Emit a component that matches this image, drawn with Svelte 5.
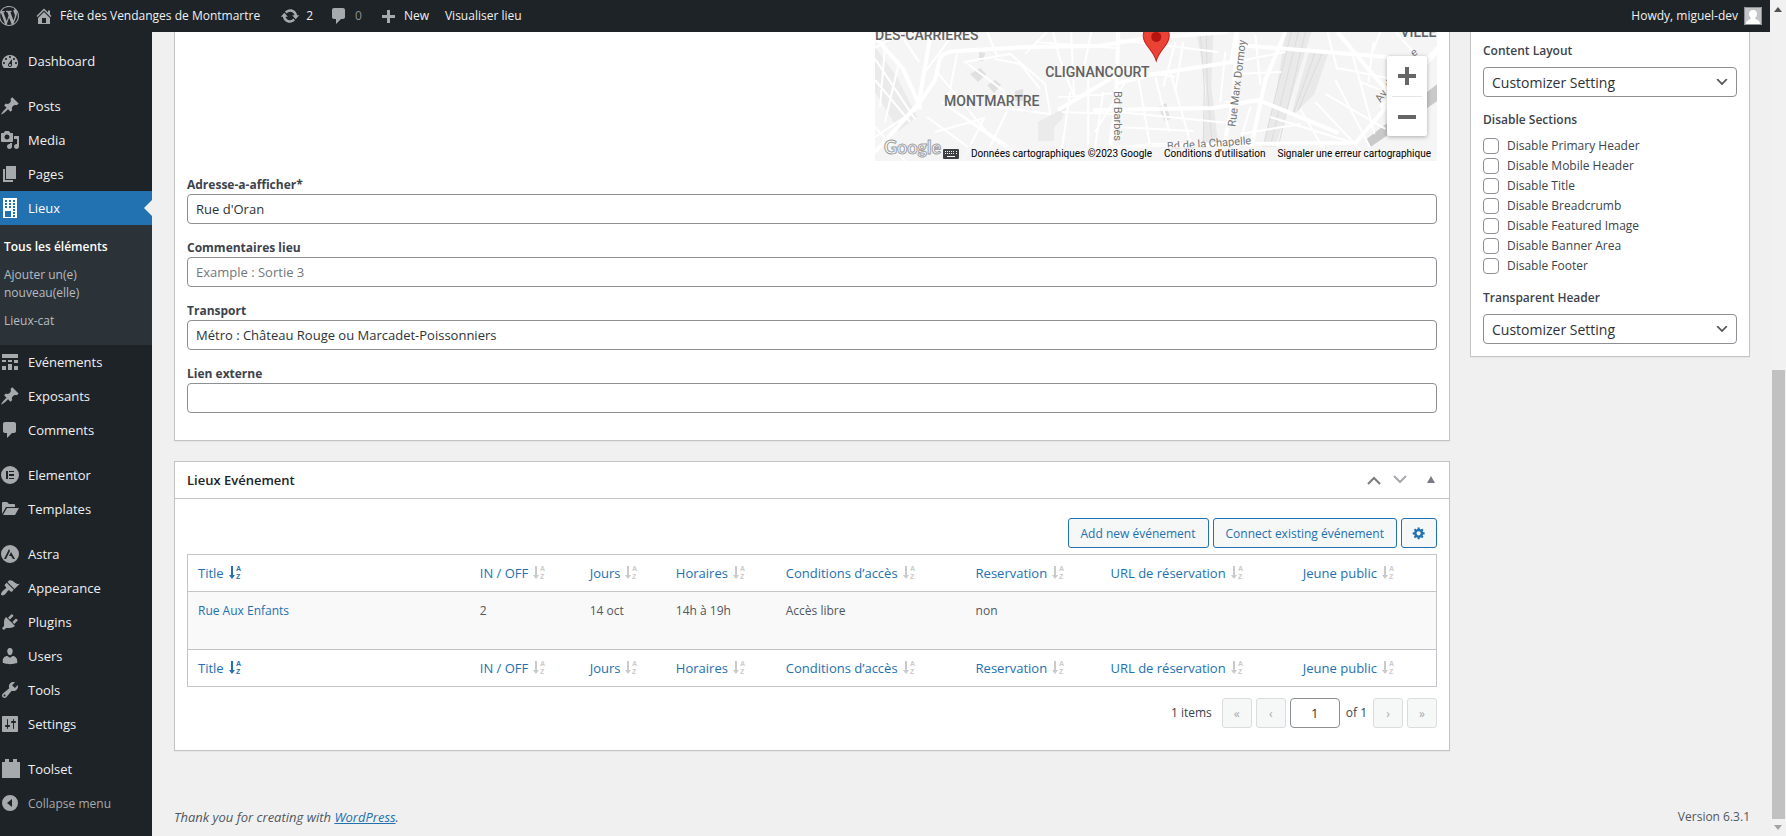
<script>
	const icons = {
		wordpress: 'M20 10c0-5.51-4.49-10-10-10C4.48 0 0 4.49 0 10c0 5.52 4.48 10 10 10 5.51 0 10-4.48 10-10zM7.78 15.37L4.37 6.22c.55-.02 1.17-.08 1.17-.08.5-.06.44-1.13-.06-1.11 0 0-1.45.11-2.37.11-.18 0-.37 0-.58-.01C4.12 2.69 6.87 1.11 10 1.11c2.33 0 4.45.87 6.05 2.34-.68-.11-1.65.39-1.65 1.58 0 .74.45 1.36.9 2.1.35.61.55 1.36.55 2.46 0 1.49-1.4 5-1.4 5l-3.03-8.37c.54-.02.82-.17.82-.17.5-.05.44-1.25-.06-1.22 0 0-1.44.12-2.38.12-.87 0-2.33-.12-2.33-.12-.5-.03-.56 1.2-.06 1.22l.92.08 1.26 3.41zM17.41 10c.24-.64.74-1.87.43-4.25.7 1.29 1.05 2.71 1.05 4.25 0 3.29-1.73 6.24-4.4 7.78.97-2.59 1.94-5.2 2.92-7.78zM6.1 18.09C3.12 16.65 1.11 13.53 1.11 10c0-1.3.23-2.48.72-3.59C3.25 10.3 4.67 14.2 6.1 18.09zm4.03-6.63l2.58 6.98c-.86.29-1.76.45-2.71.45-.79 0-1.57-.11-2.29-.33.81-2.38 1.62-4.74 2.42-7.1z',
		home: 'M16 8.5l1.53 1.53-1.06 1.06L10 4.6l-6.47 6.49-1.06-1.06L10 2.5l4 4v-2h2v4zm-6-2.46l6 5.99V18H4v-5.97zM12 17v-5H8v5h4z',
		update: 'M10.2 3.28c3.53 0 6.43 2.61 6.92 6h2.08l-3.5 4-3.5-4h2.32c-.45-1.97-2.21-3.45-4.32-3.45-1.45 0-2.73.71-3.54 1.78L4.95 5.66C6.23 4.2 8.11 3.28 10.2 3.28zm-.4 13.44c-3.52 0-6.43-2.61-6.92-6H.8l3.5-4c1.17 1.33 2.33 2.67 3.5 4H5.48c.45 1.97 2.21 3.45 4.32 3.45 1.45 0 2.73-.71 3.54-1.78l1.71 1.95c-1.28 1.46-3.15 2.38-5.25 2.38z',
		comments: 'M5 2h9c1.1 0 2 .9 2 2v7c0 1.1-.9 2-2 2h-2l-5 5v-5H5c-1.1 0-2-.9-2-2V4c0-1.1.9-2 2-2z',
		plus: 'M17 9v3h-5v5H9v-5H4V9h5V4h3v5h5z',
		dashboard: 'M3.76 17h12.48A7.998 7.998 0 0 0 10 4a7.998 7.998 0 0 0-6.24 13zM10 5c.55 0 1 .45 1 1s-.45 1-1 1-1-.45-1-1 .45-1 1-1zM6 7c.55 0 1 .45 1 1s-.45 1-1 1-1-.45-1-1 .45-1 1-1zm8 0c.55 0 1 .45 1 1s-.45 1-1 1-1-.45-1-1 .45-1 1-1zm-5.37 5.55L12 8v6c0 1.1-.9 2-2 2s-2-.9-2-2c0-.57.24-1.08.63-1.45zM4 11c.55 0 1 .45 1 1s-.45 1-1 1-1-.45-1-1 .45-1 1-1zm12 0c.55 0 1 .45 1 1s-.45 1-1 1-1-.45-1-1 .45-1 1-1zm-5 3c0-.55-.45-1-1-1s-1 .45-1 1 .45 1 1 1 1-.45 1-1z',
		post: 'M10.44 3.02l1.82-1.82 6.36 6.35-1.83 1.82c-1.05-.68-2.48-.57-3.41.36l-.75.75c-.92.93-1.04 2.35-.35 3.41l-1.83 1.82-2.41-2.41-2.8 2.79c-.42.42-3.38 2.71-3.8 2.29s1.86-3.39 2.28-3.81l2.79-2.79L4.1 9.36l1.83-1.82c1.05.69 2.48.57 3.4-.36l.75-.75c.93-.92 1.05-2.35.36-3.41z',
		media: 'M13 11V4c0-.55-.45-1-1-1h-1.67L9 1H5L3.67 3H2c-.55 0-1 .45-1 1v7c0 .55.45 1 1 1h10c.55 0 1-.45 1-1zM7 4.5c1.38 0 2.5 1.12 2.5 2.5S8.38 9.5 7 9.5 4.5 8.38 4.5 7 5.62 4.5 7 4.5zM14 6h5v10.5c0 1.38-1.12 2.5-2.5 2.5S14 17.88 14 16.5s1.12-2.5 2.5-2.5c.17 0 .34.02.5.05V9h-3V6zm-4 8.05V13h2v3.5c0 1.38-1.12 2.5-2.5 2.5S7 17.88 7 16.5 8.12 14 9.5 14c.17 0 .34.02.5.05z',
		page: 'M6 15V2h10v13H6zm-1 1h8v2H3V5h2v11z',
		building: 'M3 0h14v20H3zM5 2v2h2V2zm4 0v2h2V2zm4 0v2h2V2zM5 5v2h2V5zm4 0v2h2V5zm4 0v2h2V5zM5 8v2h2V8zm4 0v2h2V8zm4 0v2h2V8zM5 13v6h6v-6zm8-2v2h2v-2zm0 3v2h2v-2zm0 3v2h2v-2z',
		schedule: 'M2 2h16v4H2V2zm0 8V8h4v2H2zm6-2h4v2H8V8zm6 3V8h4v3h-4zm-6 7v-6h4v6H8zm-6 0v-4h4v4H2zm12 0v-4h4v4h-4z',
		elementor: 'M10 1a9 9 0 1 0 0 18 9 9 0 0 0 0-18zM6 6h2v8H6zm3 0h5v1H9zm0 3h5v2H9zm0 4h5v1H9z',
		folder: 'M2 15V4q0-1 1-1h4l2 2h5q1 0 1 1v2H6zM7 9h12l-4 7H3z',
		astra: 'M10 1a9 9 0 1 0 0 18 9 9 0 0 0 0-18zM9 5l1 2-4 8H4zm2 3l4 7h-2l-2-3H9z',
		appearance: 'M14.48 11.06L7.41 3.99l1.5-1.5c.5-.56 2.3-.47 3.51.32 1.21.8 1.43 1.28 2.91 2.1 1.18.64 2.45 1.26 4.45.85zm-.71.71L6.7 4.7 4.93 6.47c-.39.39-.39 1.02 0 1.41l1.06 1.06c.39.39.39 1.03 0 1.42-.6.6-1.43 1.11-2.21 1.69-.35.26-.7.53-1.01.84C1.43 14.23.4 16.08 1.4 17.07c.99 1 2.84-.03 4.18-1.36.31-.31.58-.66.85-1.02.57-.78 1.08-1.61 1.69-2.21.39-.39 1.02-.39 1.41 0l1.06 1.06c.39.39 1.02.39 1.41 0z',
		plugins: 'M13.11 4.36L9.87 7.6 8 5.73l3.24-3.24c.35-.34 1.05-.2 1.56.32.52.51.66 1.21.31 1.55zm-8 1.77l.91-1.12 9.01 9.01-1.19.84c-.71.71-2.63 1.16-3.82 1.16H6.14L4.9 17.26c-.59.59-1.54.59-2.12 0-.59-.58-.59-1.53 0-2.12l1.24-1.24v-3.88c0-1.13.4-3.19 1.09-3.89zm7.26 3.97l3.24-3.24c.34-.35 1.04-.21 1.55.31.52.51.66 1.21.31 1.55l-3.24 3.25z',
		users: 'M10 9.25c-2.27 0-2.73-3.44-2.73-3.44C7 4.02 7.82 2 9.97 2c2.16 0 2.98 2.02 2.71 3.81 0 0-.41 3.44-2.68 3.44zm0 2.57L12.72 10c2.39 0 4.52 2.33 4.52 4.53v2.49s-3.65 1.13-7.24 1.13c-3.65 0-7.24-1.13-7.24-1.13v-2.49c0-2.25 1.94-4.48 4.47-4.48z',
		tools: 'M16.68 9.77c-1.34 1.34-3.3 1.67-4.95.99l-5.41 6.52c-.99.99-2.59.99-3.58 0s-.99-2.59 0-3.57l6.52-5.42c-.68-1.65-.35-3.61.99-4.95 1.28-1.28 3.12-1.62 4.72-1.06l-2.89 2.89 2.82 2.82 2.86-2.87c.53 1.58.18 3.39-1.08 4.65zM3.81 16.21c.4.39 1.04.39 1.43 0 .4-.4.4-1.04 0-1.43-.39-.4-1.03-.4-1.43 0-.39.39-.39 1.03 0 1.43z',
		settings: 'M18 17V3c0-.55-.45-1-1-1H3c-.55 0-1 .45-1 1v14c0 .55.45 1 1 1h14c.55 0 1-.45 1-1zM8 11h1c.55 0 1 .45 1 1s-.45 1-1 1H8v1.5c0 .28-.22.5-.5.5s-.5-.22-.5-.5V13H6c-.55 0-1-.45-1-1s.45-1 1-1h1V5.5c0-.28.22-.5.5-.5s.5.22.5.5V11zm5-2h-1c-.55 0-1-.45-1-1s.45-1 1-1h1V5.5c0-.28.22-.5.5-.5s.5.22.5.5V7h1c.55 0 1 .45 1 1s-.45 1-1 1h-1v5.5c0 .28-.22.5-.5.5s-.5-.22-.5-.5V9z',
		toolset: 'M2 19V3h3V0h4v3h4V0h4v3h3v16z',
		collapse: 'M10 2a8 8 0 1 0 0 16 8 8 0 0 0 0-16zM12 6v8l-5-4z',
		gear: 'M18 12h-2.18c-.17.7-.44 1.35-.81 1.93l1.54 1.54-2.1 2.1-1.54-1.54c-.58.36-1.23.63-1.91.79V19H8v-2.18c-.68-.16-1.33-.43-1.91-.79l-1.54 1.54-2.12-2.12 1.54-1.54c-.36-.58-.63-1.23-.79-1.91H1V9.03h2.17c.16-.7.44-1.35.8-1.94L2.43 5.55l2.1-2.1 1.54 1.54c.58-.37 1.24-.64 1.93-.81V2h3v2.18c.68.16 1.33.43 1.91.79l1.54-1.54 2.12 2.12-1.54 1.54c.36.59.64 1.24.8 1.94H18V12zm-8.5 1.5c1.66 0 3-1.34 3-3s-1.34-3-3-3-3 1.34-3 3 1.34 3 3 3z'
	}

	const menu = [
		[{ label: 'Dashboard', icon: 'dashboard' }],
		[
			{ label: 'Posts', icon: 'post' },
			{ label: 'Media', icon: 'media' },
			{ label: 'Pages', icon: 'page' },
			{ label: 'Lieux', icon: 'building', sub: ['Tous les éléments', 'Ajouter un(e) nouveau(elle)', 'Lieux-cat'] },
			{ label: 'Evénements', icon: 'schedule' },
			{ label: 'Exposants', icon: 'post' },
			{ label: 'Comments', icon: 'comments' }
		],
		[
			{ label: 'Elementor', icon: 'elementor' },
			{ label: 'Templates', icon: 'folder' }
		],
		[
			{ label: 'Astra', icon: 'astra' },
			{ label: 'Appearance', icon: 'appearance' },
			{ label: 'Plugins', icon: 'plugins' },
			{ label: 'Users', icon: 'users' },
			{ label: 'Tools', icon: 'tools' },
			{ label: 'Settings', icon: 'settings' }
		],
		[{ label: 'Toolset', icon: 'toolset' }]
	]

	const fields = [
		{ id: 'adresse', label: 'Adresse-a-afficher*', value: "Rue d'Oran" },
		{ id: 'commentaires', label: 'Commentaires lieu', value: '', placeholder: 'Example : Sortie 3' },
		{ id: 'transport', label: 'Transport', value: 'Métro : Château Rouge ou Marcadet-Poissonniers' },
		{ id: 'lien', label: 'Lien externe', value: '' }
	]

	const sections = ['Primary Header', 'Mobile Header', 'Title', 'Breadcrumb', 'Featured Image', 'Banner Area', 'Footer']

	const columns = [
		{ label: 'Title', width: 22.6, sorted: true },
		{ label: 'IN / OFF', width: 8.8 },
		{ label: 'Jours', width: 6.9 },
		{ label: 'Horaires', width: 8.8 },
		{ label: 'Conditions d’accès', width: 15.2 },
		{ label: 'Reservation', width: 10.8 },
		{ label: 'URL de réservation', width: 15.4 },
		{ label: 'Jeune public', width: 11.5 }
	]

	const rows = [['Rue Aux Enfants', '2', '14 oct', '14h à 19h', 'Accès libre', 'non', '', '']]

	let page = '1'
</script>

{#snippet icon(name)}
	<svg class="icon" viewBox="0 0 20 20" aria-hidden="true"><path fill-rule="evenodd" d={icons[name]} /></svg>
{/snippet}

{#snippet headings()}
	<tr>
		{#each columns as col}
			<th style="width: {col.width}%">
				<a href="#sort" class="sort">
					{col.label}
					<svg class:sorted={col.sorted} viewBox="0 0 13 18" aria-hidden="true">
						<path d="M2 2h2v9h2l-3 4-3-4h2z" />
						<text x="7" y="7">A</text>
						<text x="7" y="15">Z</text>
					</svg>
				</a>
			</th>
		{/each}
	</tr>
{/snippet}

<div class="window">
	<div class="page">
		<header class="adminbar">
			<a href="#about" class="wp-logo" aria-label="About WordPress">{@render icon('wordpress')}</a>
			<a href="#site" class="site">{@render icon('home')}Fête des Vendanges de Montmartre</a>
			<a href="#updates" class="updates">{@render icon('update')}2</a>
			<a href="#comments" class="pending">{@render icon('comments')}<span>0</span></a>
			<a href="#new" class="new">{@render icon('plus')}New</a>
			<a href="#view">Visualiser lieu</a>
			<a href="#profile" class="account">
				Howdy, miguel-dev
				<svg class="avatar" viewBox="0 0 18 18" aria-hidden="true">
					<path fill="#c3c4c7" d="M0 0h18v18H0z" />
					<path fill="#fff" d="M9 3c3 0 4 2 4 4s-1 3-2 4c0 2 5 1 5 6H2c0-5 5-4 5-6-1-1-2-2-2-4s1-4 4-4z" />
					<path fill="none" stroke="#8c8f94" d="M.5.5h17v17H.5z" />
				</svg>
			</a>
		</header>

		<div class="body">
			<nav class="menu">
				{#each menu as group}
					<ul>
						{#each group as item}
							<li>
								<a href="#menu" class="item" class:current={item.sub}>{@render icon(item.icon)}{item.label}</a>
								{#if item.sub}
									<ul class="submenu">
										{#each item.sub as entry, i}
											<li><a href="#submenu" class:active={i === 0}>{entry}</a></li>
										{/each}
									</ul>
								{/if}
							</li>
						{/each}
					</ul>
				{/each}
				<button class="item collapse">{@render icon('collapse')}Collapse menu</button>
			</nav>

			<main>
				<div class="columns">
					<div class="primary">
						<section class="box fields">
							<div class="map">
								<svg class="streets" viewBox="0 0 562 129" preserveAspectRatio="xMidYMax slice" aria-hidden="true">
									<path fill="#f5f5f5" d="M0 0h562v129H0z" />
									<path fill="#ebebeb" d="M0 15l22 30 20 40-18 14L0 60zM163 90l28-15-4 12-8 8v14h-16z" />
									<path fill="#e0e0e0" d="M95 42l10-6 6 6-8 8zM112 53l8-5 6 5-7 8zM140 59l8-2v12h-8zM104 20l6 1-2 8h-4zM283 75l8-4 4 16-6 2z" />
									<path fill="#e9e9e9" d="M321 0h17l-2 55 7 58h-16l4-58zM410 0h26l-14 45-22 70h-13l14-55zM434 18h20l-15 44-24 24z" />
									<path class="rail" d="M325 0l4 55-1 58M331 0l1 55 5 58M416 0l-15 60-12 50M423 0l-15 60-12 50M430 0l-14 60-12 50M440 20l-22 62M447 20l-24 58" />
									<path fill="#c9c9c9" d="M490 108l72-56v17l-67 46z" />
									<g class="minor">
										<path d="M0 27l40 60M0 48l35 42M10 15l-5 60M24 30L10 90M0 105l45-30M0 95l30 34M52 85l60 44M66 70l90 59M60 100l50-14M88 128l20-40M108 129l24-50M78 78l72 51M130 60l-40-30 45-8 35 30 5 30-60-8zM120 27l25 5 20 25M60 38l50 60M82 22l-10 50M150 22l22-22M112 0l10 24M178 0l6 25 15 40M196 0l3 65M216 0l-8 40M183 65l60-4M187 80l55 2M195 60l-10 69M213 35v94M228 60l-10 69M160 10l80 6M240 35l60 10M243 8l100 12M300 10l-12 45M263 45l12 70M280 45l14 55M295 40l20 70M308 10l-8 50M243 95l75 4M243 80l120 12M250 50l-30 50M350 20l-5 50M350 70h40M380 3l5 50M360 30l50-10M360 42l46-2M365 102l60-10M452 0l10 38M462 36l50 10M440 70l45 48M450 62l60 35M460 48l36 70M475 15l24 87M498 10l-5 40M505 0l-10 25M520 0l20 22M485 50l50 20M395 85l80 25M425 77l30 52M375 75l-15 50M0 16l28-16M24 0l20 30M80 0L50 40" />
									</g>
									<g class="major">
										<path d="M0 120l45-50 15-22 5-22q4-7 18-7l70-4 70-1 50-8 80-6" />
										<path d="M0 5l28 32 18 40M56 0L44 70M243 0l-2 70-8 59M240 52l40-10 76-12 5-30M183 78l60-36M218 78l120-2 45-8 80 33M362 0l-4 65-12 64M362 13l150 12M462 0l30 36 40 46M195 120l85-7 200-2 30-35 52-60M410 0l-20 48-14 66M562 20L505 75" />
									</g>
									<path class="pin" d="M268 4a13 13 0 0 1 26 0c0 9-10 14-13 25-3-11-13-16-13-25z" />
									<circle cx="281" cy="5" r="5" fill="#b31412" />
									<g class="district">
										<text x="0" y="8">DES-CARRIÈRES</text>
										<text x="170" y="45">CLIGNANCOURT</text>
										<text x="69" y="74">MONTMARTRE</text>
										<text x="525" y="5">VILLE</text>
									</g>
									<g class="road">
										<text transform="translate(239 59) rotate(90)">Bd Barbès</text>
										<text transform="translate(360 95) rotate(-83)">Rue Marx Dormoy</text>
										<text transform="translate(292 118) rotate(-4)">Bd de la Chapelle</text>
										<text transform="translate(505 71) rotate(-55)">Av. de</text>
										<text transform="translate(538 25) rotate(-35)">e</text>
									</g>
									<text class="google" x="9" y="122">Google</text>
								</svg>
								<div class="zoom">
									<button aria-label="Zoom in"><svg viewBox="0 0 18 18"><path d="M7 0h4v7h7v4h-7v7H7v-7H0V7h7z" /></svg></button>
									<button aria-label="Zoom out"><svg viewBox="0 0 18 18"><path d="M0 7h18v4H0z" /></svg></button>
								</div>
								<div class="credits">
									<svg viewBox="0 0 16 10" aria-hidden="true">
										<path fill-rule="evenodd" d="M1 0h14q1 0 1 1v8q0 1-1 1H1q-1 0-1-1V1q0-1 1-1zM2 2v1h1V2zm2 0v1h1V2zm2 0v1h1V2zm2 0v1h1V2zm2 0v1h1V2zm3 0v1h1V2zM2 4v1h1V4zm2 0v1h1V4zm2 0v1h1V4zm2 0v1h1V4zm2 0v1h1V4zm3 0v1h1V4zM4 7v1h8V7z" />
									</svg>
									<span>Données cartographiques ©2023 Google</span>
									<a href="#terms">Conditions d'utilisation</a>
									<a href="#report">Signaler une erreur cartographique</a>
								</div>
							</div>

							{#each fields as field}
								<div class="field">
									<label for={field.id}>{field.label}</label>
									<input id={field.id} type="text" value={field.value} placeholder={field.placeholder} />
								</div>
							{/each}
						</section>

						<section class="box related">
							<div class="box-header">
								<h2>Lieux Evénement</h2>
								<button aria-label="Move up"><svg viewBox="0 0 14 10"><path class="line" d="M1 9l6-6 6 6" /></svg></button>
								<button aria-label="Move down" class="off"><svg viewBox="0 0 14 10"><path class="line" d="M1 1l6 6 6-6" /></svg></button>
								<button aria-label="Toggle panel"><svg viewBox="0 0 14 10"><path d="M7 1l4 7H3z" /></svg></button>
							</div>
							<div class="inside">
								<div class="actions">
									<button>Add new événement</button>
									<button>Connect existing événement</button>
									<button class="cog" aria-label="Select columns">{@render icon('gear')}</button>
								</div>
								<table>
									<thead>{@render headings()}</thead>
									<tbody>
										{#each rows as row}
											<tr>
												{#each row as cell, i}
													<td>{#if i === 0}<a href="#event">{cell}</a>{:else}{cell}{/if}</td>
												{/each}
											</tr>
										{/each}
									</tbody>
									<tfoot>{@render headings()}</tfoot>
								</table>
								<div class="pagination">
									<span class="count">1 items</span>
									<button disabled aria-label="First page">«</button>
									<button disabled aria-label="Previous page">‹</button>
									<input type="text" aria-label="Current page" bind:value={page} />
									<span class="total">of 1</span>
									<button disabled aria-label="Next page">›</button>
									<button disabled aria-label="Last page">»</button>
								</div>
							</div>
						</section>
					</div>

					<aside class="box settings">
						<label class="title" for="layout">Content Layout</label>
						<select id="layout"><option>Customizer Setting</option></select>
						<fieldset>
							<legend class="title">Disable Sections</legend>
							{#each sections as name}
								<label class="check"><input type="checkbox" />Disable {name}</label>
							{/each}
						</fieldset>
						<label class="title" for="transparent">Transparent Header</label>
						<select id="transparent"><option>Customizer Setting</option></select>
					</aside>
				</div>

				<footer>
					<em>Thank you for creating with <a href="#wordpress">WordPress</a>.</em>
					<span>Version 6.3.1</span>
				</footer>
			</main>
		</div>
	</div>

	<div class="scrollbar" aria-hidden="true">
		<svg viewBox="0 0 8 5"><path fill="#505050" d="M4 0l4 5H0z" /></svg>
		<div class="track"><div class="thumb"></div></div>
		<svg viewBox="0 0 8 5"><path fill="#a3a3a3" d="M0 0h8L4 5z" /></svg>
	</div>
</div>

<style>
	:global(body) {
		background: #f0f0f1;
		color: #3c434a;
		font-family: "Open Sans", "Noto Sans", sans-serif;
		font-size: 12px;
		line-height: 18px;
	}

	.window {
		display: flex;
		height: 100vh;
		overflow: hidden;
	}

	.page {
		flex: 1;
		min-width: 0;
		display: flex;
		flex-direction: column;
	}

	.window *,
	.window {
		box-sizing: border-box;
	}

	a {
		color: #2271b1;
		text-decoration: none;
	}

	button,
	input,
	select {
		font-family: inherit;
		font-size: 12px;
		margin: 0;
	}

	ul {
		list-style: none;
		margin: 0;
		padding: 0;
	}

	.icon {
		width: 20px;
		height: 20px;
		flex: none;
		fill: #a7aaad;
	}

	/* admin bar */
	.adminbar {
		display: flex;
		align-items: center;
		flex: none;
		height: 32px;
		padding-right: 8px;
		background: #1d2327;
	}

	.adminbar a {
		display: flex;
		align-items: center;
		gap: 6px;
		color: #f0f0f1;
		white-space: nowrap;
	}

	.adminbar .wp-logo {
		width: 34px;
	}

	.wp-logo .icon {
		margin-left: -1px;
	}

	.adminbar .updates,
	.adminbar .pending,
	.adminbar .new {
		margin-right: 16px;
	}

	.adminbar .site {
		margin-right: 20px;
	}

	.pending span {
		color: #8c8f94;
	}

	.adminbar .account {
		margin-left: auto;
	}

	.avatar {
		width: 18px;
		height: 18px;
	}

	.body {
		display: flex;
		flex: 1;
		min-height: 0;
	}

	/* side menu */
	.menu {
		display: flex;
		flex-direction: column;
		flex: none;
		gap: 11px;
		width: 152px;
		padding-top: 12px;
		background: #1d2327;
	}

	.item {
		display: flex;
		align-items: center;
		gap: 8px;
		position: relative;
		width: 100%;
		height: 34px;
		padding: 0;
		border: 0;
		background: none;
		color: #f0f0f1;
		font-size: 13px;
	}

	.item.current {
		background: #2271b1;
		color: #fff;
	}

	.current .icon {
		fill: #fff;
	}

	.current::after {
		content: "";
		position: absolute;
		right: 0;
		border: 8px solid transparent;
		border-right-color: #f0f0f1;
	}

	.collapse {
		margin-top: -11px;
		color: #a7aaad;
		font-size: 12px;
	}

	.submenu {
		padding: 8px 0 10px;
		background: #2c3338;
	}

	.submenu a {
		display: block;
		padding: 5px 40px 5px 4px;
		color: #b5bcc2;
	}

	.submenu .active {
		padding-right: 0;
		color: #fff;
		font-weight: 600;
	}

	/* content */
	main {
		flex: 1;
		min-width: 0;
		display: flex;
		flex-direction: column;
		padding: 0 20px 0 22px;
	}

	.columns {
		display: flex;
		align-items: flex-start;
		gap: 20px;
	}

	.primary {
		flex: 1;
		min-width: 0;
	}

	.box {
		border: 1px solid #c3c4c7;
		background: #fff;
		box-shadow: 0 1px 1px rgba(0, 0, 0, 0.04);
	}

	.fields {
		padding: 0 12px 27px;
		border-top: 0;
		margin-bottom: 20px;
	}

	.field {
		display: flex;
		flex-direction: column;
		margin-top: 15px;
	}

	.field label {
		font-weight: 700;
	}

	input[type="text"],
	select {
		height: 30px;
		padding: 0 8px;
		border: 1px solid #8c8f94;
		border-radius: 4px;
		background: #fff;
		color: #2c3338;
		font-size: 13px;
	}

	input::placeholder {
		color: #72777c;
		opacity: 1;
	}

	/* map */
	.map {
		position: relative;
		width: 45%;
		height: 129px;
		margin-left: auto;
		overflow: hidden;
		font-family: Roboto, sans-serif;
	}

	.streets {
		display: block;
		width: 100%;
		height: 100%;
	}

	.minor path,
	.major path {
		fill: none;
		stroke: #fff;
		stroke-width: 2;
	}

	.major path {
		stroke-width: 4;
	}

	.rail {
		fill: none;
		stroke: #dcdcdc;
	}

	.pin {
		fill: #ea4335;
		stroke: #c5221f;
	}

	.district text {
		fill: #616161;
		font-size: 14px;
		font-weight: 500;
	}

	.road text {
		fill: #757575;
		font-size: 11px;
	}

	.google {
		fill: #fff;
		stroke: #9e9e9e;
		font-family: Lato, sans-serif;
		font-size: 18px;
		font-weight: 700;
	}

	.zoom {
		position: absolute;
		top: 24px;
		right: 10px;
		display: flex;
		flex-direction: column;
		width: 40px;
		padding: 0 5px;
		border-radius: 2px;
		background: #fff;
		box-shadow: 0 1px 4px rgba(0, 0, 0, 0.3);
	}

	.zoom button {
		height: 40px;
		padding: 0;
		border: 0;
		background: none;
	}

	.zoom button + button {
		border-top: 1px solid #e6e6e6;
	}

	.zoom svg {
		display: block;
		width: 18px;
		margin: auto;
		fill: #666;
	}

	.credits {
		position: absolute;
		right: 0;
		bottom: 0;
		display: flex;
		align-items: center;
		gap: 12px;
		height: 14px;
		padding-right: 6px;
		background: rgba(245, 245, 245, 0.8);
		color: #000;
		font-size: 10px;
		line-height: 14px;
		white-space: nowrap;
	}

	.credits a {
		color: #000;
	}

	.credits svg {
		width: 16px;
		height: 10px;
		fill: #3c4043;
	}

	/* related posts */
	.box-header {
		display: flex;
		align-items: center;
		height: 37px;
		padding: 0 8px 0 12px;
		border-bottom: 1px solid #c3c4c7;
	}

	h2 {
		flex: 1;
		margin: 0;
		color: #1d2327;
		font-size: 13px;
		font-weight: 600;
	}

	.box-header button {
		width: 26px;
		padding: 0;
		border: 0;
		background: none;
	}

	.box-header button:last-child {
		margin-left: 8px;
		width: 20px;
	}

	.box-header svg {
		display: block;
		width: 14px;
		margin: auto;
		fill: #787c82;
	}

	.box-header .line {
		fill: none;
		stroke: #787c82;
		stroke-width: 2;
	}

	.box-header .off .line {
		stroke: #a7aaad;
	}

	.inside {
		padding: 19px 12px 22px;
	}

	.actions {
		display: flex;
		justify-content: flex-end;
		gap: 4px;
		margin-bottom: 6px;
	}

	.actions button {
		height: 30px;
		padding: 0 12px;
		border: 1px solid #2271b1;
		border-radius: 3px;
		background: #f6f7f7;
		color: #2271b1;
	}

	.actions .cog {
		padding: 0 10px;
	}

	.cog .icon {
		display: block;
		width: 14px;
		height: 14px;
		fill: #2271b1;
	}

	table {
		width: 100%;
		border: 1px solid #c3c4c7;
		border-collapse: collapse;
		table-layout: fixed;
	}

	th,
	td {
		padding: 0 10px;
		text-align: left;
		font-weight: 400;
		white-space: nowrap;
	}

	th {
		height: 37px;
		font-size: 13px;
	}

	td {
		height: 58px;
		padding-top: 10px;
		border: solid #c3c4c7;
		border-width: 1px 0;
		background: #f9f9f9;
		color: #50575e;
		vertical-align: top;
	}

	.sort {
		display: flex;
		align-items: center;
		gap: 5px;
	}

	.sort svg {
		width: 13px;
		height: 18px;
		fill: #c9cacc;
		font-family: "Liberation Sans", Arial, sans-serif;
		font-size: 7px;
		font-weight: 700;
	}

	.sort .sorted {
		fill: #2271b1;
	}

	.pagination {
		display: flex;
		align-items: center;
		justify-content: flex-end;
		gap: 4px;
		margin-top: 11px;
	}

	.count {
		margin-right: 6px;
	}

	.total {
		margin: 0 2px;
	}

	.pagination button {
		width: 30px;
		height: 30px;
		padding: 0;
		border: 1px solid #dcdcde;
		border-radius: 3px;
		background: #f6f7f7;
		color: #a7aaad;
	}

	.pagination input {
		width: 50px;
		text-align: center;
	}

	/* page settings */
	.settings {
		display: flex;
		flex-direction: column;
		flex: none;
		width: 280px;
		padding: 10px 12px 12px;
		border-top: 0;
	}

	.title {
		font-weight: 600;
	}

	select {
		appearance: none;
		margin: 7px 0 14px;
	}

	.settings select {
		background: #fff url('data:image/svg+xml,%3Csvg xmlns="http://www.w3.org/2000/svg" viewBox="0 0 20 20"%3E%3Cpath d="M5 6l5 5 5-5 2 1-7 7-7-7 2-1z" fill="%23555"/%3E%3C/svg%3E') no-repeat right 6px center / 16px;
		font-size: 14px;
	}

	select:last-child {
		margin-bottom: 0;
	}

	fieldset {
		display: flex;
		flex-direction: column;
		margin: 0 0 13px;
		padding: 0;
		border: 0;
	}

	legend {
		margin-bottom: 7px;
		padding: 0;
	}

	.check {
		display: flex;
		align-items: center;
		gap: 8px;
		height: 20px;
	}

	.check input {
		appearance: none;
		width: 16px;
		height: 16px;
		border: 1px solid #8c8f94;
		border-radius: 4px;
		background: #fff;
	}

	footer {
		display: flex;
		justify-content: space-between;
		margin-top: auto;
		padding-bottom: 10px;
		color: #50575e;
	}

	footer em {
		font-size: 13px;
	}

	footer a {
		text-decoration: underline;
	}

	/* window scrollbar */
	.scrollbar {
		display: flex;
		flex-direction: column;
		align-items: center;
		flex: none;
		width: 16px;
		padding: 7px 0 6px;
		background: #f1f1f1;
	}

	.scrollbar svg {
		width: 8px;
		height: 5px;
	}

	.track {
		display: flex;
		align-items: flex-end;
		flex: 1;
		width: 13px;
		margin: 5px 0 6px;
	}

	.thumb {
		width: 100%;
		height: 56%;
		background: #c1c1c1;
	}
</style>
